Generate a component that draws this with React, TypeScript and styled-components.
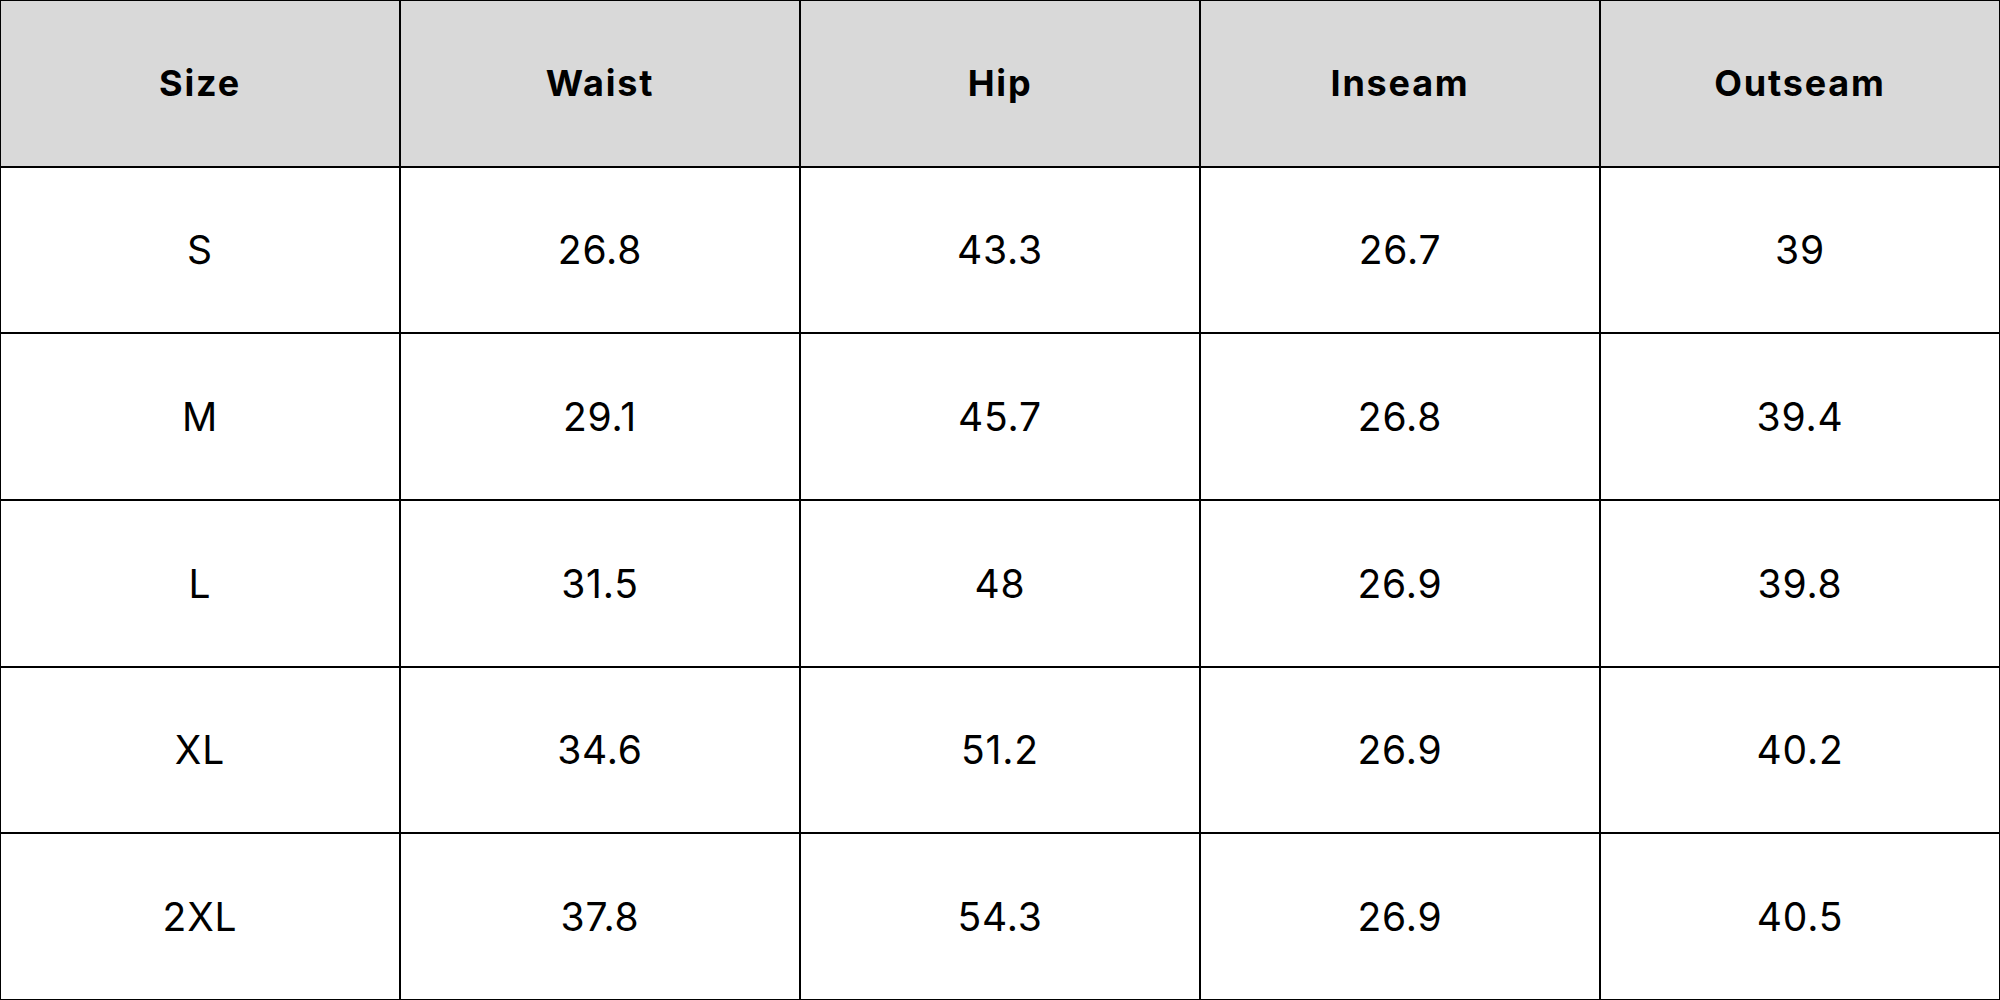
import React from "react";
import styled, { createGlobalStyle } from "styled-components";

const Global = createGlobalStyle`
  html, body { margin: 0; padding: 0; background: #ffffff; }
  body { font-family: Inter, "Open Sans", sans-serif; }
`;

const Grid = styled.div`
  box-sizing: border-box;
  width: 2000px;
  height: 1000px;
  display: grid;
  grid-template-columns: repeat(5, 1fr);
  grid-template-rows: repeat(6, 1fr);
  gap: 2px;
  padding: 1px;
  background: #000000;
`;

const HeadCell = styled.div`
  background: #d9d9d9;
  display: flex;
  align-items: center;
  justify-content: center;
  padding-bottom: 1px;
  font-family: Inter, "Open Sans", sans-serif;
  font-weight: 700;
  font-size: 36px;
  letter-spacing: 1.8px;
  color: #000000;
`;

const Cell = styled.div`
  background: #ffffff;
  display: flex;
  align-items: center;
  justify-content: center;
  font-family: Inter, "Open Sans", sans-serif;
  font-weight: 400;
  font-size: 39px;
  letter-spacing: 0.8px;
  color: #000000;
`;

const headers = ["Size", "Waist", "Hip", "Inseam", "Outseam"];
const rows = [
  ["S", "26.8", "43.3", "26.7", "39"],
  ["M", "29.1", "45.7", "26.8", "39.4"],
  ["L", "31.5", "48", "26.9", "39.8"],
  ["XL", "34.6", "51.2", "26.9", "40.2"],
  ["2XL", "37.8", "54.3", "26.9", "40.5"],
];

export default function App() {
  return (
    <>
      <Global />
      <Grid>
        {headers.map((h) => (
          <HeadCell key={h}>{h}</HeadCell>
        ))}
        {rows.map((r, i) =>
          r.map((v, j) => <Cell key={`${i}-${j}`}>{v}</Cell>)
        )}
      </Grid>
    </>
  );
}
